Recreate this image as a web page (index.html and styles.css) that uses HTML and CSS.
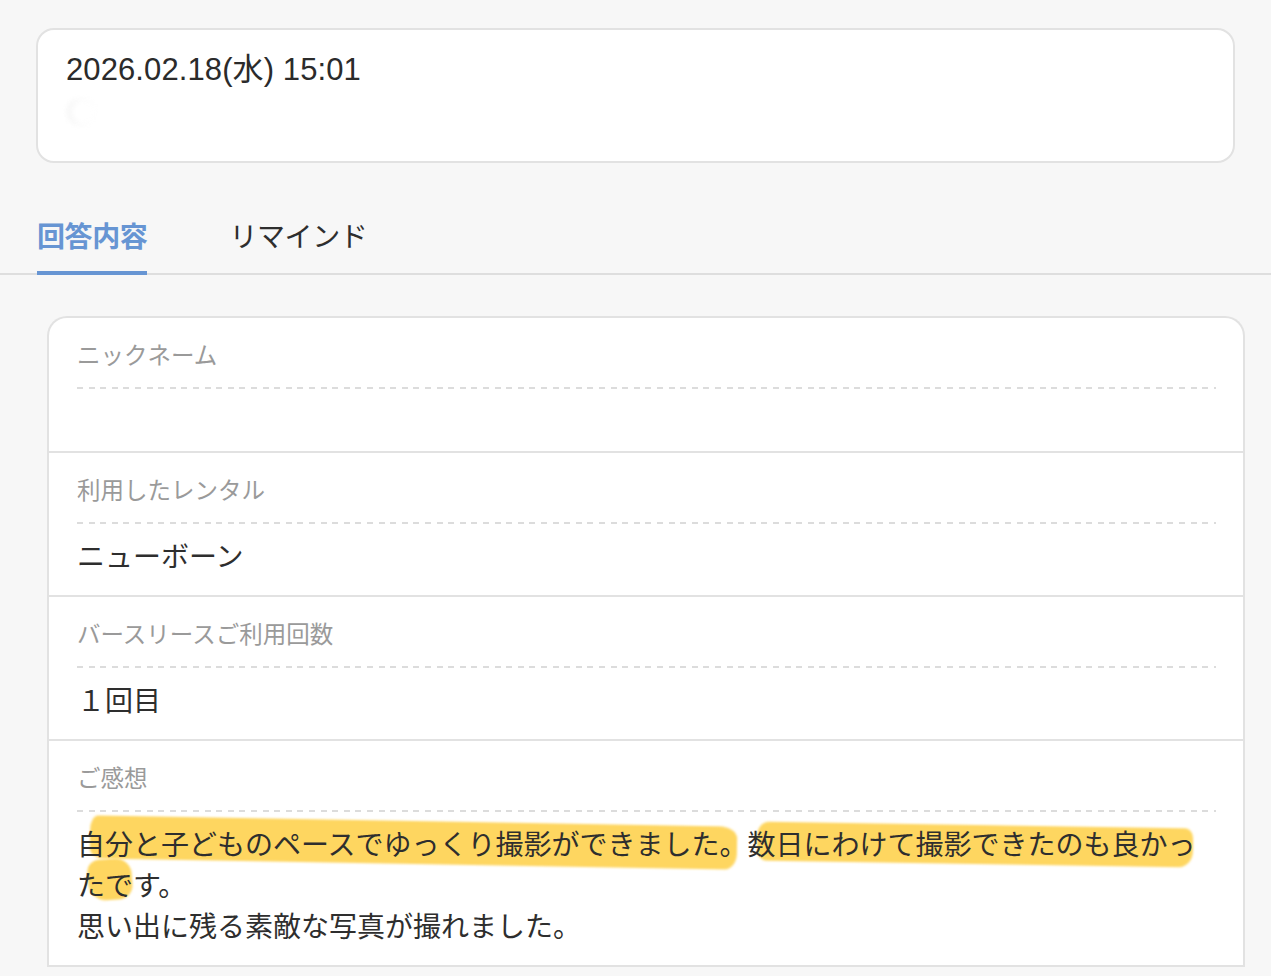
FILE: index.html
```html
<!DOCTYPE html>
<html lang="ja">
<head>
<meta charset="utf-8">
<title>回答内容</title>
<link rel="stylesheet" href="styles.css">
</head>
<body>
<div class="page">
  <div class="head-card">
    <div class="date">2026.02.18(水) 15:01</div>
    <div class="masked"></div>
  </div>

  <nav class="tabs">
    <div class="tab active">回答内容</div>
    <div class="tab">リマインド</div>
  </nav>

  <div class="answers">
    <section class="item">
      <div class="label">ニックネーム</div>
      <div class="value empty"></div>
    </section>
    <section class="item">
      <div class="label">利用したレンタル</div>
      <div class="value">ニューボーン</div>
    </section>
    <section class="item">
      <div class="label">バースリースご利用回数</div>
      <div class="value">１回目</div>
    </section>
    <section class="item">
      <div class="label">ご感想</div>
      <div class="value marked">
        <span class="mark mark-a"></span>
        <span class="mark mark-b"></span>
        <span class="mark mark-c"></span>
        <p class="text">自分と子どものペースでゆっくり撮影ができました。数日にわけて撮影できたのも良かったです。<br>思い出に残る素敵な写真が撮れました。</p>
      </div>
    </section>
  </div>
</div>
</body>
</html>
```

FILE: styles.css
```css
html, body {
  margin: 0;
  padding: 0;
  background: #f7f7f7;
}

body {
  font-family: "Noto Sans CJK JP", "Noto Sans", sans-serif;
  color: #333;
  height: 976px;
  overflow: hidden;
}

.page {
  padding-top: 28px;
}

.head-card {
  margin: 0 36px 0 36px;
  height: 131px;
  box-sizing: content-box;
  background: #fff;
  border: 2px solid #e2e2e2;
  border-radius: 18px;
  padding: 0 28px;
  position: relative;
}

.date {
  font-family: "Liberation Sans", "Noto Sans CJK JP", sans-serif;
  font-size: 31px;
  line-height: 40px;
  padding-top: 20px;
  color: #2b2b2b;
  letter-spacing: 0.1px;
}

.masked {
  width: 30px;
  height: 28px;
  margin-top: 8px;
  border-radius: 50%;
  background: radial-gradient(circle at 60% 50%, #fff 45%, #f2f2f2 70%, #fff 90%);
  filter: blur(2px);
  opacity: 0.7;
}

.tabs {
  margin-top: 52px;
  display: flex;
  gap: 82px;
  padding-left: 37px;
  border-bottom: 2px solid #dedede;
}

.tab {
  font-size: 28px;
  line-height: 40px;
  padding-bottom: 16px;
  border-bottom: 4px solid transparent;
  margin-bottom: -2px;
  color: #2e2e2e;
  letter-spacing: -0.4px;
}

.tab.active {
  color: #6795d3;
  font-weight: 700;
  border-bottom-color: #6795d3;
}

.answers {
  margin: 41px 26px 0 47px;
  background: #fff;
  border: 2px solid #e2e2e2;
  border-bottom: none;
  border-radius: 20px 20px 0 0;
}

.item {
  padding: 20px 27px 19px 28px;
  border-bottom: 2px solid #e2e2e2;
}

.label {
  font-size: 23.5px;
  line-height: 32px;
  color: #9a9a9a;
  padding-bottom: 19px;
  background: repeating-linear-gradient(to right, #dcdcdc 0 6px, transparent 6px 11.6px) left bottom / 100% 2px no-repeat;
  margin-bottom: 11px;
}

.value {
  font-size: 28px;
  line-height: 41px;
  color: #2e2e2e;
  min-height: 41px;
}

.value.empty {
  min-height: 32px;
}

.value.marked {
  position: relative;
}

.text {
  margin: 0;
  position: relative;
}

.mark {
  position: absolute;
  background: rgb(254, 214, 96);
  filter: blur(1.2px);
}

.mark-a {
  left: 13px;
  top: -2px;
  width: 647px;
  height: 43px;
  border-radius: 8px 18px 12px 14px / 14px 12px 16px 10px;
  transform: rotate(1deg);
}

.mark-b {
  left: 680px;
  top: 2px;
  width: 436px;
  height: 39px;
  border-radius: 12px 8px 14px 10px / 14px 10px 16px 12px;
  transform: rotate(0.9deg);
}

.mark-c {
  left: 11px;
  top: 36px;
  width: 44px;
  height: 41px;
  border-radius: 12px 16px 14px 18px;
  transform: rotate(-4deg);
}
```
